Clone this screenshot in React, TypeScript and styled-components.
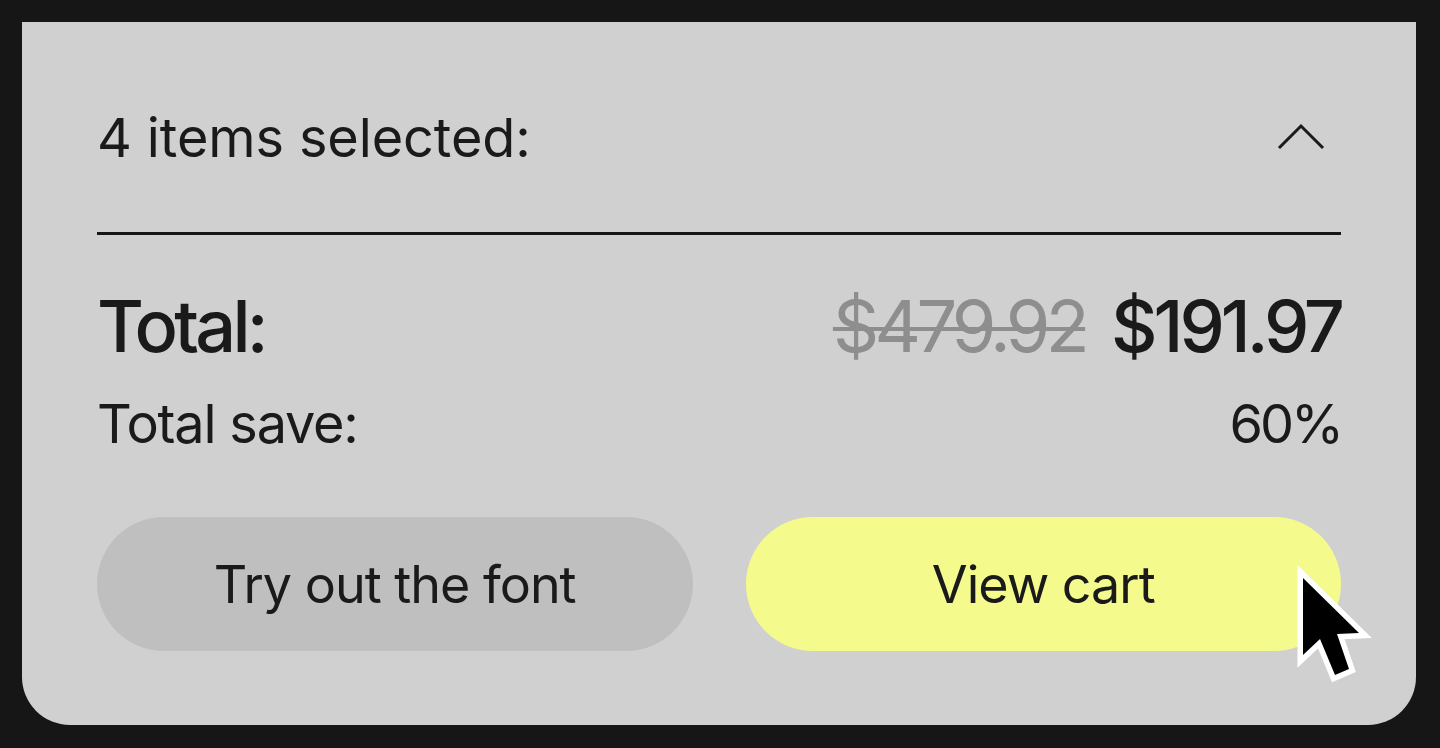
import * as React from 'react'
import styled, { createGlobalStyle } from 'styled-components'

const GlobalStyle = createGlobalStyle`
  html, body {
    margin: 0;
    padding: 0;
    background: #161616;
  }
  body {
    font-family: Inter, "Noto Sans", sans-serif;
    color: #1a1a1a;
  }
`

const Page = styled.div`
  width: 1440px;
  height: 748px;
  box-sizing: border-box;
  padding: 22px 24px 23px 22px;
`

const Panel = styled.section`
  position: relative;
  height: 100%;
  box-sizing: border-box;
  background: #d0d0d0;
  border-radius: 0 0 48px 48px;
  padding: 0 75px 74px;
  display: flex;
  flex-direction: column;
`

const Header = styled.div`
  height: 190px;
  padding-top: 20px;
  display: flex;
  align-items: center;
  justify-content: space-between;
  border-bottom: 3px solid #161616;
`

const HeaderTitle = styled.h3`
  margin: 0;
  font-size: 54px;
  font-weight: 400;
  letter-spacing: -0.1px;
`

const Chevron = styled.svg`
  width: 48px;
  height: 28px;
  margin-right: 16px;
`

const Row = styled.div<{ $top: number }>`
  display: flex;
  align-items: center;
  justify-content: space-between;
  margin-top: ${p => p.$top}px;
`

const Label = styled.span<{ $size: number; $weight?: number; $track?: number }>`
  font-size: ${p => p.$size}px;
  font-weight: ${p => p.$weight || 400};
  line-height: 1;
  letter-spacing: ${p => (p.$track !== undefined ? p.$track : -1)}px;
`

const Prices = styled.div`
  display: flex;
  align-items: baseline;
  gap: 26px;
`

const OldPrice = styled.s`
  font-size: 72px;
  line-height: 1;
  color: #8e8e8e;
  letter-spacing: -4.6px;
  text-decoration-thickness: 4px;
`

const Buttons = styled.div`
  margin-top: auto;
  display: grid;
  grid-template-columns: 1fr 1fr;
  gap: 53px;
`

const Button = styled.button<{ $primary?: boolean }>`
  height: 134px;
  border: none;
  border-radius: 67px;
  background: ${p => (p.$primary ? '#f5fa8c' : '#bfbfbf')};
  color: #1a1a1a;
  font-family: inherit;
  font-size: 52px;
  letter-spacing: -1px;
  cursor: pointer;
`

const Cursor = styled.svg`
  position: absolute;
  left: 1263px;
  top: 531px;
  width: 100px;
  height: 140px;
`

export default function App() {
  return (
    <Page>
      <GlobalStyle />
      <Panel>
        <Header>
          <HeaderTitle>4 items selected:</HeaderTitle>
          <Chevron viewBox="0 0 48 28">
            <path d="M2 25 L24 3 L46 25" fill="none" stroke="#1a1a1a" strokeWidth="3" />
          </Chevron>
        </Header>
        <Row $top={55}>
          <Label $size={72} $weight={500} $track={-3.8}>Total:</Label>
          <Prices>
            <OldPrice>$479.92</OldPrice>
            <Label $size={72} $weight={500} $track={-4}>$191.97</Label>
          </Prices>
        </Row>
        <Row $top={35}>
          <Label $size={54} $track={-1.2}>Total save:</Label>
          <Label $size={54} $track={-3}>60%</Label>
        </Row>
        <Buttons>
          <Button>Try out the font</Button>
          <Button $primary>View cart</Button>
        </Buttons>
        <Cursor viewBox="0 0 100 140">
          <path
            d="M18 25 L18 102 L35 86 L50 122 L64 116 L52 81 L74 80 Z"
            fill="#000"
            stroke="#fff"
            strokeWidth="11"
            strokeLinejoin="miter"
            paintOrder="stroke"
          />
        </Cursor>
      </Panel>
    </Page>
  )
}
